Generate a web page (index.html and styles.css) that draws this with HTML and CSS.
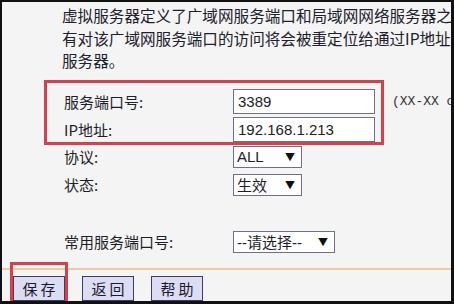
FILE: index.html
```html
<!doctype html>
<html lang="zh-CN">
  <head>
    <meta charset="UTF-8" />
    <title>虚拟服务器</title>
    <link rel="stylesheet" href="styles.css">
  </head>
  <body>
    <div class="frame">
      <p class="intro">
        虚拟服务器定义了广域网服务端口和局域网网络服务器之间的映射关系，所<br />
        有对该广域网服务端口的访问将会被重定位给通过IP地址指定的局域网网络<br />
        服务器。
      </p>

      <form class="vs-form">
        <div class="row row-port">
          <label for="port">服务端口号:</label>
          <input type="text" id="port" value="3389" />
          <span class="hint">(XX-XX or XX)</span>
        </div>
        <div class="row row-ip">
          <label for="ip">IP地址:</label>
          <input type="text" id="ip" value="192.168.1.213" />
        </div>
        <div class="row row-proto">
          <label>协议:</label>
          <div class="select select-short"><span>ALL</span><i>▼</i></div>
        </div>
        <div class="row row-state">
          <label>状态:</label>
          <div class="select select-short"><span>生效</span><i>▼</i></div>
        </div>
        <div class="row row-common">
          <label>常用服务端口号:</label>
          <div class="select select-long"><span>--请选择--</span><i>▼</i></div>
        </div>

        <div class="actions">
          <button type="button">保存</button>
          <button type="button">返回</button>
          <button type="button">帮助</button>
        </div>
      </form>

      <!-- annotation marks -->
      <div class="mark mark-fields"></div>
      <div class="mark mark-save"></div>
    </div>
  </body>
</html>
```

FILE: styles.css
```css
body {
  margin: 0;
  padding: 0;
  background: #111;
}
.frame {
  position: relative;
  width: 454px;
  height: 304px;
  box-sizing: border-box;
  border-style: solid;
  border-color: #111;
  border-width: 2px 3px 3px 2px;
  background-color: #f4f4f4;
  overflow: hidden;
  font-family: "Noto Sans CJK SC", "Liberation Sans", sans-serif;
  color: #1e1e2a;
}
.intro {
  margin: 0;
  padding: 2px 0 0 60px;
  font-size: 15.6px;
  line-height: 22.5px;
  white-space: nowrap;
  color: #20202c;
}

.vs-form {
  margin: 0;
}
.row {
  display: flex;
  align-items: center;
  height: 25px;
}
.row label {
  flex-shrink: 0;
  width: 169px;
  padding-left: 62px;
  box-sizing: content-box;
  font-size: 15px;
  color: #1e1e28;
}
.row-port {
  margin-top: 17px;
}
.row-ip {
  margin-top: 3px;
}
.row-proto {
  margin-top: 4px;
  height: 22px;
}
.row-state {
  margin-top: 6px;
  height: 22px;
}
.row-common {
  margin-top: 35px;
  height: 22px;
}

input[type="text"] {
  flex-shrink: 0;
  width: 142px;
  height: 25px;
  box-sizing: border-box;
  border: 1px solid #6e7088;
  background: #fff;
  padding: 0 4px;
  font-family: "Liberation Sans", Arial, sans-serif;
  font-size: 15px;
  color: #222;
}
.hint {
  flex-shrink: 0;
  margin-left: 17px;
  font-family: "Liberation Mono", monospace;
  font-size: 13px;
  white-space: nowrap;
  color: #333;
}

.select {
  flex-shrink: 0;
  display: flex;
  align-items: center;
  justify-content: space-between;
  height: 22px;
  box-sizing: border-box;
  border: 1px solid #6e7088;
  background: #fff;
  padding: 0 6px 0 3px;
  font-size: 15px;
}
.select span {
  font-family: "Liberation Sans", "Noto Sans CJK SC", sans-serif;
  white-space: nowrap;
}
.select i {
  font-style: normal;
  font-size: 10px;
  color: #111;
}
.select-short {
  width: 69px;
}
.select-long {
  width: 102px;
}

.actions {
  display: flex;
  gap: 17px;
  margin-top: 15px;
  padding: 6px 0 0 11px;
  border-top: 2px solid #efc9a2;
}
.actions button {
  width: 52px;
  height: 25px;
  border: 1px solid #3c3c6a;
  background-color: #dcdcf2;
  font-family: "Noto Sans CJK SC", sans-serif;
  font-size: 15px;
  letter-spacing: 3px;
  padding: 0 0 0 3px;
  color: #1a1a2a;
}

.mark {
  position: absolute;
  border: 3px solid #d6404a;
  box-sizing: border-box;
}
.mark-fields {
  left: 42px;
  top: 78px;
  width: 340px;
  height: 65px;
}
.mark-save {
  left: 8px;
  top: 260px;
  width: 58px;
  height: 46px;
}
```
